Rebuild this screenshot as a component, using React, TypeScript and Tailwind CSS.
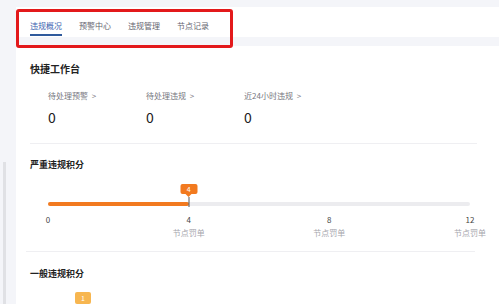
const tabs = ['违规概况', '预警中心', '违规管理', '节点记录']

const quick = [
  { label: '待处理预警', value: 0 },
  { label: '待处理违规', value: 0 },
  { label: '近24小时违规', value: 0 },
]

const ticks = [
  { v: 0, sub: '' },
  { v: 4, sub: '节点罚单' },
  { v: 8, sub: '节点罚单' },
  { v: 12, sub: '节点罚单' },
]

function pct(v: number) {
  return `${(v / 12) * 100}%`
}

function ScoreSlider({ value }: { value: number }) {
  return (
    <div className="relative ml-[18px] mr-[15px] h-[80px]">
      <div className="absolute left-0 right-0 top-[31px] h-[4px] rounded-full bg-[#ececef]" />
      <div className="absolute left-0 top-[31px] h-[4px] rounded-full bg-[#f27a1f]" style={{ width: pct(value) }} />
      <div className="absolute top-[13px] -translate-x-1/2 flex flex-col items-center" style={{ left: pct(value) }}>
        <div className="h-[10px] w-[17px] rounded-[2px] bg-[#f27a1f] text-white text-[7px] leading-[10px] text-center">{value}</div>
        <div className="w-0 h-0 border-l-[3px] border-r-[3px] border-t-[3px] border-l-transparent border-r-transparent border-t-[#f27a1f]" />
        <div className="w-px h-[10px] bg-[#555]" />
      </div>
      {ticks.map((t) => (
        <div
          key={t.v}
          className="absolute top-[44px] -translate-x-1/2 flex flex-col items-center"
          style={{ left: pct(t.v) }}
        >
          <span className="text-[8px] leading-[10px] text-[#444]">{t.v}</span>
          <span className="mt-[3px] text-[8px] leading-[10px] text-[#a6a6ad] whitespace-nowrap">{t.sub}</span>
        </div>
      ))}
    </div>
  )
}

export default function App() {
  return (
    <div
      className="relative w-[499px] h-[304px] overflow-hidden bg-[#f4f5f9] flex"
      style={{ fontFamily: '"Noto Sans CJK SC", "Noto Sans", sans-serif' }}
    >
      <div className="w-[16px] shrink-0 pl-[3px] pt-[162px]">
        <div className="w-[3px] h-full bg-[#e0e1e5]" />
      </div>

      <div className="flex-1 flex flex-col pt-[7px]">
        <div className="h-[33px] bg-white flex items-stretch pl-[14px] gap-[17px]">
          {tabs.map((t, i) => (
            <div key={t} className="relative flex items-center pt-[9px]">
              <span className={`text-[8px] ${i === 0 ? 'text-[#3d64b0]' : 'text-[#666670]'}`}>{t}</span>
              {i === 0 && <div className="absolute left-0 right-0 bottom-[1px] h-[2px] bg-[#2f5a9c]" />}
            </div>
          ))}
        </div>

        <div className="h-[10px]" />

        <div className="flex-1 bg-white px-[14px] pt-[16px]">
          <div className="text-[10px] font-bold text-[#222] leading-[14px]">快捷工作台</div>
          <div className="flex pl-[18px] mt-[15px]">
            {quick.map((q) => (
              <div key={q.label} className="w-[98px] flex flex-col">
                <span className="text-[8px] leading-[10px] text-[#777780]">
                  {q.label} <span className="ml-[2px]">&gt;</span>
                </span>
                <span className="mt-[9px] text-[14px] leading-[14px] text-[#222]">{q.value}</span>
              </div>
            ))}
          </div>
          <div className="mt-[19px] mr-[8px] h-px bg-[#efeff2]" />

          <div className="mt-[15px] text-[9px] font-bold text-[#222] leading-[12px]">严重违规积分</div>
          <ScoreSlider value={4} />

          <div className="mr-[10px] -ml-[4px] h-px bg-[#efeff2]" />
          <div className="mt-[16px] text-[9px] font-bold text-[#222] leading-[12px]">一般违规积分</div>
          <div className="mt-[12px] ml-[45px] w-[16px] h-[12px] rounded-[2px] bg-[#f7b650] text-white text-[7px] leading-[12px] text-center">1</div>
        </div>
      </div>

      <div className="absolute left-[16px] top-[9px] w-[217px] h-[39px] border-[3px] border-[#e3191b] rounded-[3px]" />
    </div>
  )
}
